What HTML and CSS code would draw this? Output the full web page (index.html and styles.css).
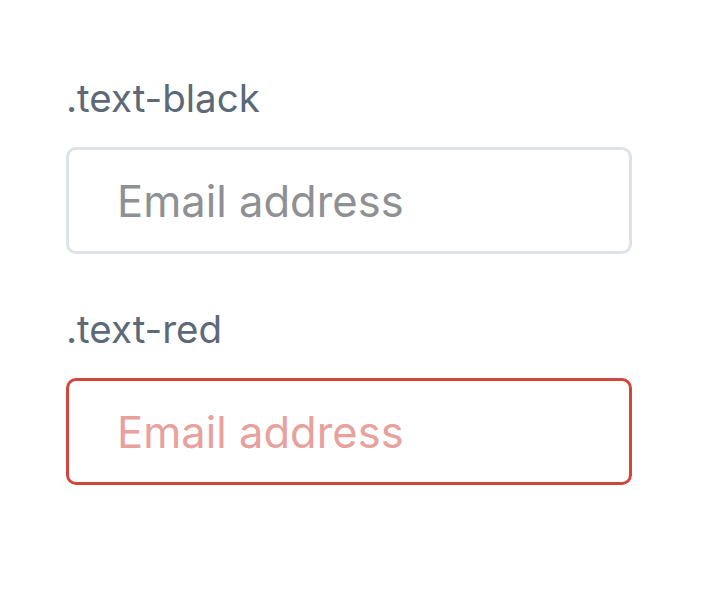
FILE: index.html
```html
<!DOCTYPE html>
<html lang="en">
<head>
  <meta charset="UTF-8" />
  <title>Input text colors</title>
  <link rel="stylesheet" href="styles.css">
</head>
<body>
  <div class="demo">
    <div class="field">
      <label class="field-label" for="email-black">.text-black</label>
      <input class="input input-black" id="email-black" type="email" placeholder="Email address">
    </div>
    <div class="field">
      <label class="field-label" for="email-red">.text-red</label>
      <input class="input input-red" id="email-red" type="email" placeholder="Email address">
    </div>
  </div>
</body>
</html>
```

FILE: styles.css
```css
body {
  margin: 0;
  background: #fff;
  font-family: Inter, "Noto Sans", sans-serif;
}

.demo {
  padding: 71px 0 0 66px;
  width: 566px;
}

.field {
  margin-bottom: 48px;
}

.field-label {
  display: block;
  font-size: 38.5px;
  line-height: 54px;
  color: #5c6977;
  margin-bottom: 22px;
}

.input {
  display: block;
  box-sizing: border-box;
  width: 100%;
  height: 107px;
  padding: 0 20px 0 48px;
  border: 3px solid #dde2e8;
  border-radius: 10px;
  background: #fff;
  font-family: inherit;
  font-size: 43.5px;
  outline: none;
}

.input-black::placeholder {
  color: #8e9094;
}

.input-red {
  border-color: #d1473c;
}

.input-red::placeholder {
  color: #e8a19c;
}
```
